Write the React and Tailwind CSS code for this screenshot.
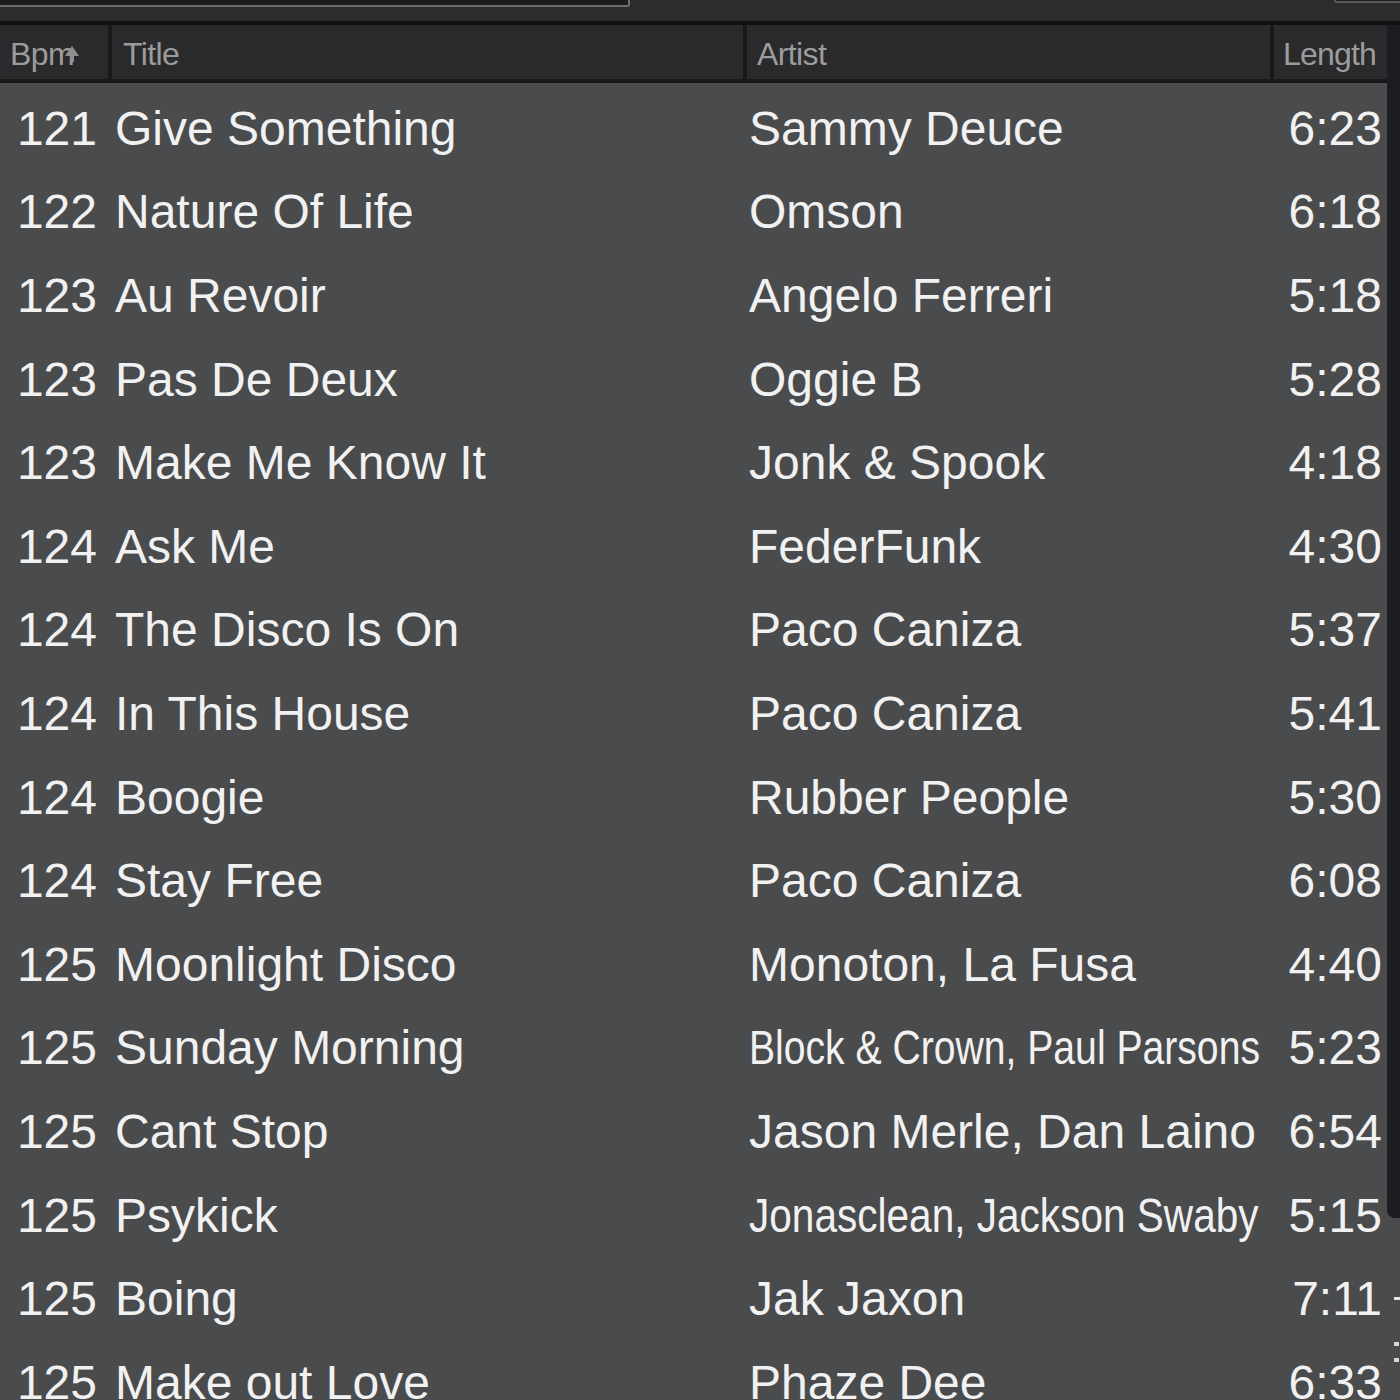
import React from 'react';

const TRACKS = [
  { bpm: 121, title: 'Give Something', artist: 'Sammy Deuce', length: '6:23' },
  { bpm: 122, title: 'Nature Of Life', artist: 'Omson', length: '6:18' },
  { bpm: 123, title: 'Au Revoir', artist: 'Angelo Ferreri', length: '5:18' },
  { bpm: 123, title: 'Pas De Deux', artist: 'Oggie B', length: '5:28' },
  { bpm: 123, title: 'Make Me Know It', artist: 'Jonk & Spook', length: '4:18' },
  { bpm: 124, title: 'Ask Me', artist: 'FederFunk', length: '4:30' },
  { bpm: 124, title: 'The Disco Is On', artist: 'Paco Caniza', length: '5:37' },
  { bpm: 124, title: 'In This House', artist: 'Paco Caniza', length: '5:41' },
  { bpm: 124, title: 'Boogie', artist: 'Rubber People', length: '5:30' },
  { bpm: 124, title: 'Stay Free', artist: 'Paco Caniza', length: '6:08' },
  { bpm: 125, title: 'Moonlight Disco', artist: 'Monoton, La Fusa', length: '4:40' },
  // long artist names get squeezed to fit the column
  { bpm: 125, title: 'Sunday Morning', artist: 'Block & Crown, Paul Parsons', length: '5:23', squeeze: 'scale-x-[0.815]' },
  { bpm: 125, title: 'Cant Stop', artist: 'Jason Merle, Dan Laino', length: '6:54' },
  { bpm: 125, title: 'Psykick', artist: 'Jonasclean, Jackson Swaby', length: '5:15', squeeze: 'scale-x-[0.845]' },
  { bpm: 125, title: 'Boing', artist: 'Jak Jaxon', length: '7:11' },
  { bpm: 125, title: 'Make out Love', artist: 'Phaze Dee', length: '6:33' },
];

function SortArrow() {
  return (
    <svg width="16" height="18" viewBox="0 0 16 18" className="-ml-[10px] mb-[1px]">
      <path d="M8 1 L15 11 L10 11 L10 17 L6 17 L6 11 L1 11 Z" fill="#8f8f8f" />
    </svg>
  );
}

function HeaderCell({ children, className = '' }) {
  return (
    <div className={`h-full flex items-center pt-[4px] border-r-[4px] border-[#19191b] text-[32px] tracking-[-0.6px] text-[#9c9c9c] ${className}`}>
      {children}
    </div>
  );
}

export default function App() {
  return (
    <div
      className="w-[1400px] h-[1400px] overflow-hidden bg-[#4a4b4d] flex flex-col"
      style={{ fontFamily: "'Liberation Sans', Arial, sans-serif" }}
    >
      {/* toolbar with the search field edges */}
      <div className="h-[21px] flex items-start bg-[#2c2c2e] shrink-0">
        <div className="w-[630px] h-[7px] bg-[#1c1c1e] border-b-2 border-r-2 border-[#6d6d6d] rounded-br-[3px]" />
        <div className="ml-auto w-[66px] h-[3px] bg-[#1c1c1e] border-b-2 border-l-2 border-[#5a5a5a] rounded-bl-[3px]" />
      </div>
      <div className="h-[4px] bg-[#111113] shrink-0" />

      <div className="flex flex-1 min-h-0">
        <div className="w-[1387px] flex flex-col">
          {/* column headers */}
          <div className="h-[58px] flex bg-[#2a2a2c] border-b-[4px] border-[#18181a] shrink-0">
            <HeaderCell className="w-[112px] pl-[10px]">
              <span>Bpm</span>
              <SortArrow />
            </HeaderCell>
            <HeaderCell className="w-[635px] pl-[11px]">Title</HeaderCell>
            <HeaderCell className="w-[527px] pl-[10px]">Artist</HeaderCell>
            <div className="flex-1 h-full flex items-center pt-[4px] pl-[9px] text-[32px] text-[#9c9c9c] tracking-[-0.8px]">
              Length
            </div>
          </div>

          {/* track rows */}
          <div className="pt-[4px] text-[48px] text-[#f1f1f1]">
            {TRACKS.map((t, i) => (
              <div key={i} className="h-[83.6px] flex items-center whitespace-nowrap leading-none">
                <div className="w-[97px] text-right">{t.bpm}</div>
                <div className="w-[652px] pl-[18px]">{t.title}</div>
                <div className="w-[510px] overflow-visible">
                  <span className={`inline-block origin-left ${t.squeeze || ''}`}>{t.artist}</span>
                </div>
                <div className="flex-1 text-right pr-[5px]">{t.length}</div>
              </div>
            ))}
          </div>
        </div>

        {/* scrollbar gutter on the right */}
        <div className="flex-1 flex flex-col">
          <div className="h-[1193px] bg-[#1c1d20] rounded-bl-[8px] shrink-0" />
          <div className="pt-[79px] pl-[7px] flex flex-col gap-[42px]">
            <div className="w-[6px] h-[3px] bg-[#e6e6e6]" />
            <div className="flex flex-col gap-[12px]">
              <div className="w-[5px] h-[4px] bg-[#d8d8d8]" />
              <div className="w-[5px] h-[4px] bg-[#d8d8d8]" />
            </div>
          </div>
        </div>
      </div>
    </div>
  );
}
